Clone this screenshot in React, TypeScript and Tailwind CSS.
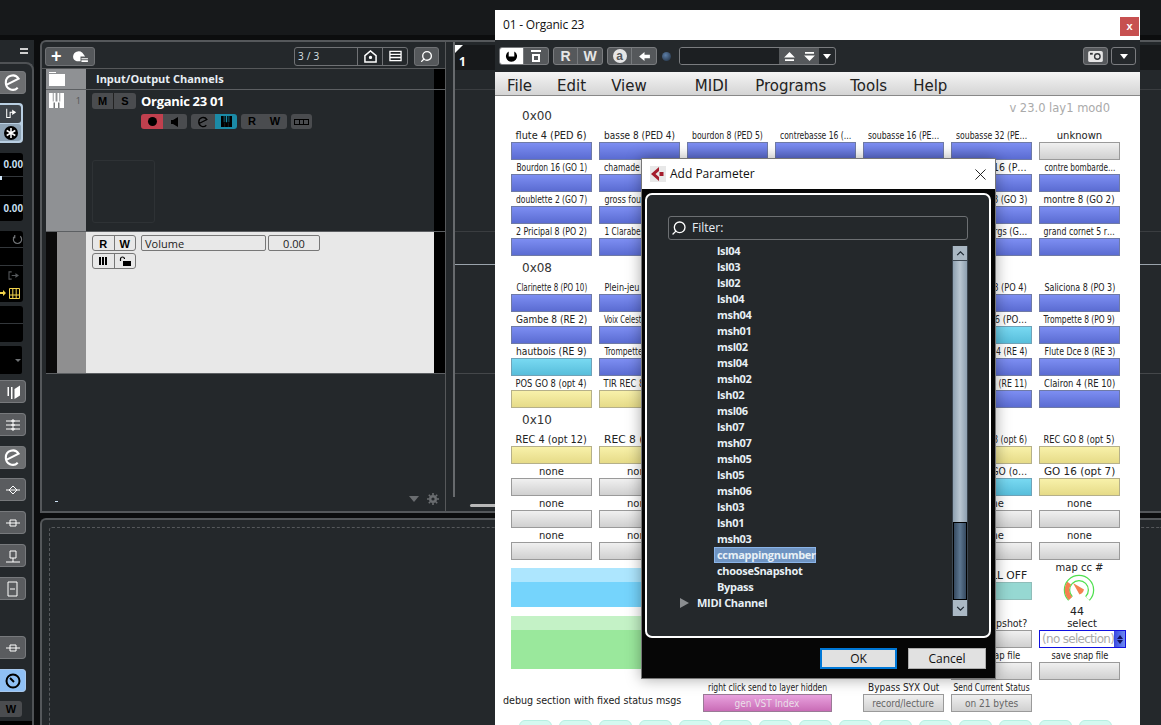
import { useLayoutEffect, useRef, useState, type ReactNode } from 'react';
import { Search } from 'lucide-react';

type Tone = 'b' | 'c' | 'y' | 'g';
type Cell = [string, Tone];

const tones: Record<Tone, string> = {
  b: 'border-[#6f7aa6] bg-linear-to-b from-[#7d8ef2] to-[#5b6cd2]',
  c: 'border-[#6fa3b8] bg-linear-to-b from-[#78d9f2] to-[#58bedb]',
  y: 'border-[#b5b08a] bg-linear-to-b from-[#f8f1aa] to-[#e6db88]',
  g: 'border-[#9a9a9a] bg-linear-to-b from-[#f0f0f0] to-[#d0d0d0]',
};

// empty labels sit fully behind the Add Parameter dialog
const sec1: Cell[] = [
  ['flute 4 (PED 6)', 'b'], ['basse 8 (PED 4)', 'b'], ['bourdon 8 (PED 5)', 'b'], ['contrebasse 16 (…', 'b'], ['soubasse 16 (PE…', 'b'], ['soubasse 32 (PE…', 'b'], ['unknown', 'g'],
  ['Bourdon 16 (GO 1)', 'b'], ['chamade 8 (GO 9)', 'b'], ['', 'b'], ['', 'b'], ['', 'b'], ['montre 16 (P…', 'b'], ['contre bombarde…', 'b'],
  ['doublette 2 (GO 7)', 'b'], ['gross fourniture 4', 'b'], ['', 'b'], ['', 'b'], ['', 'b'], ['bourdon 8 (GO 3)', 'b'], ['montre 8 (GO 2)', 'b'],
  ['2 Pricipal 8 (PO 2)', 'b'], ['1 Clarabelle 8 (PO)', 'b'], ['', 'b'], ['', 'b'], ['', 'b'], ['Cornet 5 rgs (G…', 'b'], ['grand cornet 5 r…', 'b'],
];

const sec2: Cell[] = [
  ['Clarinette 8 (PO 10)', 'b'], ['Plein-jeu 5 (PO 8)', 'b'], ['', 'b'], ['', 'b'], ['', 'b'], ['Bourdon 8 (PO 4)', 'b'], ['Saliciona 8 (PO 3)', 'b'],
  ['Gambe 8 (RE 2)', 'b'], ['Voix Celeste 8 (RE 5)', 'b'], ['', 'b'], ['', 'b'], ['', 'b'], ['basson 16 (PO…', 'c'], ['Trompette 8 (PO 9)', 'b'],
  ['hautbois (RE 9)', 'c'], ['Trompette 8 (RE 8)', 'b'], ['', 'b'], ['', 'b'], ['', 'b'], ['Flute Dce 4 (RE 4)', 'b'], ['Flute Dce 8 (RE 3)', 'b'],
  ['POS GO 8 (opt 4)', 'y'], ['TIR REC 8 (opt 2)', 'y'], ['', 'y'], ['', 'y'], ['', 'b'], ['Basson 16 (RE 11)', 'b'], ['Clairon 4 (RE 10)', 'b'],
];

const sec3: Cell[] = [
  ['REC 4 (opt 12)', 'y'], ['REC 8 (opt 8)', 'y'], ['', 'y'], ['', 'y'], ['', 'y'], ['REC POS 8 (opt 6)', 'y'], ['REC GO 8 (opt 5)', 'y'],
  ['none', 'g'], ['none', 'g'], ['', 'g'], ['', 'g'], ['', 'g'], ['Tirasse GO (o…', 'c'], ['GO 16 (opt 7)', 'y'],
  ['none', 'g'], ['none', 'g'], ['', 'g'], ['', 'g'], ['', 'g'], ['none', 'g'], ['none', 'g'],
  ['none', 'g'], ['none', 'g'], ['', 'g'], ['', 'g'], ['', 'g'], ['none', 'g'], ['none', 'g'],
];

const params = ['lsl04', 'lsl03', 'lsl02', 'lsh04', 'msh04', 'msh01', 'msl02', 'msl04', 'msh02', 'lsh02', 'msl06', 'lsh07', 'msh07', 'msh05', 'lsh05', 'msh06', 'lsh03', 'lsh01', 'msh03', 'ccmappingnumber', 'chooseSnapshot', 'Bypass'];

// JUCE squeezes labels to the cell width, so measure and do the same
function Label({ text, width = 71 }: { text: string; width?: number }) {
  const ref = useRef<HTMLSpanElement>(null);
  const [scale, setScale] = useState(1);
  useLayoutEffect(() => {
    const w = ref.current?.offsetWidth ?? 0;
    if (w > width) setScale(width / w);
  }, [text, width]);
  const size = text.length > 19 || text.length <= 8 ? 'text-[10px]' : 'text-[11px]';
  return (
    <div className="flex h-[14px] items-center justify-center pt-px">
      <span
        ref={ref}
        style={{ transform: `scaleX(${scale})` }}
        className={`inline-block shrink-0 whitespace-nowrap font-['DejaVu_Sans'] leading-[13px] text-[#222] ${size}`}
      >
        {text}
      </span>
    </div>
  );
}

function Stop({ label, tone, width }: { label: string; tone: Tone; width?: number }) {
  return (
    <div>
      <Label text={label} width={width} />
      <div className={`h-[18px] border ${tones[tone]}`} />
    </div>
  );
}

function Section({ title, cells, aside }: { title: string; cells: Cell[]; aside?: ReactNode }) {
  return (
    <div className="pl-4">
      <div className="relative flex h-[24px] items-center pl-[11px] font-['DejaVu_Sans'] text-[12px] text-[#333]">
        {title}
        {aside}
      </div>
      <div className="grid grid-cols-[repeat(7,81px)] gap-x-[7px]">
        {cells.map(([label, tone], i) => (
          <Stop key={i} label={label} tone={tone} />
        ))}
      </div>
    </div>
  );
}

function ELogo({ className = '' }: { className?: string }) {
  return (
    <svg viewBox="0 0 20 20" className={className} fill="none" stroke="currentColor" strokeWidth="2.2">
      <path d="M3.5 12.5 L16.5 6 A7.3 7.3 0 0 0 3 10 A7.3 7.3 0 0 0 15.5 15.5" />
    </svg>
  );
}

function Keys({ className = '' }: { className?: string }) {
  return (
    <svg viewBox="0 0 16 16" className={className} fill="currentColor">
      <path d="M0 0h4v9h1V0h2v9h2V0h2v9h1V0h4v16H0z" />
      <path d="M5 10h1v6H5zM10 10h1v6h-1z" fill="#24282b" />
    </svg>
  );
}

function Seg({ children, className = '' }: { children: ReactNode; className?: string }) {
  return <div className={`flex h-[16px] w-[24px] items-center justify-center ${className}`}>{children}</div>;
}

function Group({ children, className = '' }: { children: ReactNode; className?: string }) {
  return <div className={`flex divide-x divide-[#777a7d] overflow-hidden rounded-[3px] border border-[#7a7c7f] ${className}`}>{children}</div>;
}

const tbText = "font-['Liberation_Sans'] text-[14px] font-bold leading-none text-[#e6e6e6]";
const railBtn = 'flex h-[23px] w-[26px] items-center justify-center rounded-r-[4px] border border-l-0 border-[#77797c] bg-[#5a5c5f] text-white';
const smallBtn = "flex h-[16px] w-[22px] items-center justify-center font-['Liberation_Sans'] text-[11px] font-black leading-none";
const darkBtn = 'bg-[#4a4c4f] text-black';
const lightBtn = 'text-black';

function RailIcon({ d, className = 'mt-[10px]' }: { d: string; className?: string }) {
  return (
    <div className={`${railBtn} ${className}`}>
      <svg viewBox="0 0 16 16" className="h-4 w-4" fill="none" stroke="currentColor" strokeWidth="1">
        <path d={d} />
      </svg>
    </div>
  );
}

function LeftRail() {
  return (
    <div className="flex w-[34px] shrink-0 flex-col bg-[#24282b]">
      <div className="flex h-[22px] shrink-0 items-center justify-end pr-[6px]">
        <div className="h-[6px] w-2 border-y-2 border-[#d0d0d0]" />
      </div>
      <div className="flex flex-1 flex-col rounded-tr-[8px] border-t-2 border-r-2 border-[#4f5255] pt-[7px]">
        <div className={`${railBtn} bg-[#6d6f71]`}>
          <ELogo className="h-[19px] w-[19px]" />
        </div>
        <div className="mt-[9px] w-[23px] rounded-r-[4px] bg-[#b9cfe2] py-[2px] pr-[2px]">
          <div className="flex h-[18px] items-center justify-center rounded-r-[3px] bg-[#3c4248] text-white">
            <svg viewBox="0 0 14 14" className="h-3 w-3" fill="none" stroke="currentColor" strokeWidth="1.2">
              <path d="M2 1v10h4V5h5M9 3l3 2-3 2z" />
            </svg>
          </div>
          <div className="mt-[1px] flex h-[17px] items-center justify-center rounded-r-[3px] bg-[#8ea3b5]">
            <svg viewBox="0 0 14 14" className="h-[14px] w-[14px]">
              <circle cx="7" cy="7" r="7" fill="black" />
              <path d="M7 2v10M2.7 4.5l8.6 5M2.7 9.5l8.6-5" stroke="white" strokeWidth="1.5" />
            </svg>
          </div>
        </div>
        <div className="mt-[10px] flex h-[68px] w-[23px] flex-col rounded-r-[3px] bg-black font-['Liberation_Sans'] text-[10px] font-bold text-[#cfe4f8]">
          <div className="h-[23px] pt-[7px] text-right leading-none">0.00</div>
          <div className="h-px bg-[#33373b]" />
          <div className="mt-[-1px] h-[4px] w-[2px] bg-[#cfe4f8]" />
          <div className="mt-[15px] h-px bg-[#33373b]" />
          <div className="pt-[8px] text-right leading-none">0.00</div>
        </div>
        <div className="mt-[10px] flex w-[23px] flex-col rounded-r-[3px] bg-black">
          <div className="flex h-[17px] items-center justify-end border-b border-[#33373b] text-[#6f7275]">
            <svg viewBox="0 0 12 12" className="h-[11px] w-[11px]" fill="none" stroke="currentColor" strokeWidth="1.3">
              <path d="M3 2.5A4.5 4.5 0 1 0 9 2.5M3 1v3h-2" />
            </svg>
          </div>
          <div className="h-[18px] border-b border-[#33373b]" />
          <div className="flex h-[18px] items-center justify-end pr-[4px] text-[#55585b]">
            <svg viewBox="0 0 12 10" className="h-[9px] w-[11px]" fill="none" stroke="currentColor" strokeWidth="1.2">
              <path d="M4 1H1v8h3M4 5h7M8 3l3 2-3 2" />
            </svg>
          </div>
          <div className="flex h-[18px] items-center justify-between text-[#f3d44c]">
            <svg viewBox="0 0 6 8" className="h-2 w-[6px]" fill="currentColor">
              <path d="M0 3h3V1l3 3-3 3V5H0z" />
            </svg>
            <svg viewBox="0 0 11 11" className="mr-[3px] h-[11px] w-[11px]" fill="none" stroke="currentColor" strokeWidth="1">
              <path d="M.5.5h10v10H.5zM3.8.5v10M7.2.5v10M.5 7h10" />
            </svg>
          </div>
        </div>
        <div className="mt-[4px] h-[36px] w-[23px] rounded-r-[3px] bg-black">
          <div className="h-[18px] border-b border-[#33373b]" />
        </div>
        <div className="mt-[4px] flex h-[28px] w-[23px] items-center justify-end pr-[1px]">
          <div className="flex h-full w-full items-center justify-end rounded-r-[2px] bg-black pr-[1px]">
            <div className="h-0 w-0 border-x-[3px] border-t-[3px] border-x-transparent border-t-[#6f7275]" />
          </div>
        </div>
        <div className={`${railBtn} mt-[6px]`}>
          <svg viewBox="0 0 16 16" className="h-4 w-4" fill="currentColor">
            <path d="M2.5 3H4v9H2.5zM6 3h1.5v12H6zM9.5 15V5L15 1.5v10z" />
          </svg>
        </div>
        <RailIcon d="M1 4h14M1 8h14M1 12h14M7 3h2v2H7zM7 7h2v2H7zM7 11h2v2H7z" />
        <div className={`${railBtn} mt-[10px] bg-[#6d6f71]`}>
          <ELogo className="h-[19px] w-[19px]" />
        </div>
        <RailIcon className="mt-[9px]" d="M1 8h14M8 4l4 4-4 4-4-4z" />
        <RailIcon d="M1 8h14M5 5h6v6H5z" />
        <RailIcon d="M1 14h14M5 3h6v7H5zM8 10v4" />
        <RailIcon d="M3 1h9v14H3zM5 8h5" />
        <RailIcon className="mt-[36px]" d="M1 8h14M5 5h6v6H5z" />
        <div className="mt-[10px] flex h-[23px] w-[26px] items-center justify-center rounded-r-[4px] border border-l-0 border-[#a8c8ec] bg-[#8fc0f5]">
          <svg viewBox="0 0 16 16" className="h-4 w-4" fill="none" stroke="black" strokeWidth="2">
            <circle cx="8" cy="8" r="6.5" />
            <path d="M5 5l4 4" />
          </svg>
        </div>
        <div className={`mt-[9px] w-[22px] ${smallBtn} rounded-r-[3px] ${darkBtn}`}>W</div>
        <div className="mt-[4px] flex-1 bg-black" />
      </div>
    </div>
  );
}

function TrackList() {
  return (
    <div className="ml-[4px] flex h-[305px] shrink-0 flex-col">
      <div className="flex h-[21px] border-b border-[#5c5f62]">
        <div className="flex w-[40px] items-center bg-[#8f9194] pl-[3px]">
          <svg viewBox="0 0 16 14" className="h-[14px] w-[16px]" fill="white">
            <path d="M0 0h7v1H0zM0 2h16v12H0z" />
          </svg>
        </div>
        <div className="flex-1 pl-[10px] font-['Open_Sans'] text-[11px] font-bold leading-[20px] text-[#e8eef4]">Input/Output Channels</div>
        <div className="w-[11px] bg-black" />
      </div>
      <div className="flex h-[142px] border-b border-[#5c5f62]">
        <div className="flex w-[40px] items-start justify-between bg-[#8f9194] pt-[3px] pr-[5px] pl-[3px] text-white">
          <Keys className="h-[15px] w-[15px]" />
          <span className="font-['Open_Sans'] text-[9px] leading-[16px] text-[#555]">1</span>
        </div>
        <div className="flex flex-1 flex-col pt-[3px] pl-[6px]">
          <div className="flex">
            <div className="flex h-[16px] divide-x divide-[#222] overflow-hidden rounded-[3px]">
              <div className={`${smallBtn} ${darkBtn}`}>M</div>
              <div className={`${smallBtn} ${darkBtn}`}>S</div>
            </div>
            <div className="ml-[5px] font-['Open_Sans'] text-[13px] leading-[17px] font-bold tracking-[-0.3px] text-white">Organic 23 01</div>
          </div>
          <div className="mt-[4px] ml-[49px] flex gap-[4px]">
            <div className="flex h-[15px] overflow-hidden rounded-[3px]">
              <div className="flex w-[22px] items-center justify-center bg-[#c0404e]">
                <div className="h-[9px] w-[9px] rounded-full bg-black" />
              </div>
              <div className="flex w-[24px] items-center justify-center bg-[#4a4c4f]">
                <svg viewBox="0 0 8 10" className="h-[10px] w-2" fill="black">
                  <path d="M0 3h2l5-3v10L2 7H0z" />
                </svg>
              </div>
            </div>
            <div className="flex h-[15px] overflow-hidden rounded-[3px]">
              <div className="flex w-[24px] items-center justify-center bg-[#4a4c4f] text-black">
                <ELogo className="h-[12px] w-[12px]" />
              </div>
              <div className="flex w-[22px] items-center justify-center bg-[#1b8aa6] text-black">
                <Keys className="h-[11px] w-[11px]" />
              </div>
            </div>
            <div className={`flex h-[15px] w-[46px] justify-around overflow-hidden rounded-[3px] ${darkBtn} font-['Liberation_Sans'] text-[11px] leading-[15px] font-black`}>
              <span>R</span>
              <span>W</span>
            </div>
            <div className="flex h-[15px] w-[21px] items-center justify-center rounded-[3px] bg-[#4a4c4f]">
              <div className="flex h-[6px] w-[15px] divide-x divide-black border border-black">
                <div className="flex-1" />
                <div className="flex-1" />
                <div className="flex-1" />
              </div>
            </div>
          </div>
          <div className="mt-[31px] h-[63px] w-[63px] rounded-[3px] border border-[#2e3235]" />
        </div>
        <div className="w-[11px] bg-black" />
      </div>
      <div className="flex flex-1 border-b border-[#5c5f62]">
        <div className="w-[11px] bg-[#0a0a0a]" />
        <div className="w-[29px] bg-[#8f8f90]" />
        <div className="flex flex-1 flex-col gap-[2px] bg-[#e8e8e8] pt-[3px] pl-[6px]">
          <div className="flex">
            <div className="flex h-[16px] w-[44px] divide-x divide-[#777] overflow-hidden rounded-[3px] border border-[#777]">
              <div className={`${smallBtn} flex-1 ${lightBtn}`}>R</div>
              <div className={`${smallBtn} flex-1 ${lightBtn}`}>W</div>
            </div>
            <div className="ml-[5px] h-[16px] w-[125px] rounded-[2px] border border-[#777] pl-[3px] font-['Open_Sans'] text-[11px] leading-[15px] text-[#222]">Volume</div>
            <div className="ml-[2px] h-[16px] w-[52px] rounded-[2px] border border-[#777] text-center font-['Open_Sans'] text-[11px] leading-[15px] text-[#222]">0.00</div>
          </div>
          <div className="flex h-[16px] w-[44px] divide-x divide-[#777] overflow-hidden rounded-[3px] border border-[#777]">
            <div className="flex flex-1 items-center justify-center gap-px">
              <i className="h-[8px] w-[2px] bg-black" />
              <i className="h-[8px] w-[2px] bg-black" />
              <i className="h-[8px] w-[2px] bg-black" />
            </div>
            <div className="flex flex-1 items-center justify-center">
              <svg viewBox="0 0 12 10" className="h-[10px] w-[12px]">
                <path d="M1.5 5V3a2 2 0 0 1 4 0" fill="none" stroke="black" strokeWidth="1.2" />
                <path d="M4 5h8v5H4z" fill="black" />
              </svg>
            </div>
          </div>
        </div>
        <div className="w-[11px] bg-black" />
      </div>
    </div>
  );
}

function ProjectPanel() {
  return (
    <div className="flex h-[473px] shrink-0 overflow-hidden rounded-tl-[6px] border-t-2 border-b-2 border-l-2 border-[#55585b] bg-[#24282b]">
      <div className="flex w-[404px] shrink-0 flex-col border-r border-[#56585a]">
        <div className="flex h-[27px] shrink-0 items-center justify-between border-b border-[#56585a] pt-[2px] pr-[6px] pl-[3px]">
          <div className="flex h-[19px] w-[50px] items-center justify-around rounded-[3px] border border-[#707275] bg-[#55585b] text-white">
            <span className="font-['Liberation_Sans'] text-[18px] leading-none font-bold">+</span>
            <svg viewBox="0 0 18 14" className="h-[13px] w-[17px]" fill="currentColor">
              <path d="M1 7a6 6 0 0 1 10-4l3 4h-5v5H5a5 5 0 0 1-4-5zM10 9h7v1h-7zM10 11h7v2h-7z" />
            </svg>
          </div>
          <div className="flex gap-[6px]">
            <div className="flex h-[19px] overflow-hidden rounded-[3px] border border-[#707275]">
              <div className="w-[62px] pl-[3px] font-['Open_Sans'] text-[10px] leading-[17px] tracking-wide text-[#dde3e8]">3 / 3</div>
              <div className="flex w-[25px] items-center justify-center border-l border-[#707275] text-white">
                <svg viewBox="0 0 14 14" className="h-[13px] w-[13px]" fill="none" stroke="currentColor" strokeWidth="1.6">
                  <path d="M1 6l6-5 6 5v7H1z" />
                  <circle cx="7" cy="8" r="1" fill="currentColor" />
                </svg>
              </div>
              <div className="flex w-[25px] items-center justify-center border-l border-[#707275] text-white">
                <svg viewBox="0 0 14 12" className="h-[12px] w-[13px]" fill="none" stroke="currentColor" strokeWidth="1.4">
                  <path d="M1 1h12v10H1zM1 4.3h12M1 7.6h12" />
                </svg>
              </div>
            </div>
            <div className="flex h-[19px] w-[25px] items-center justify-center rounded-[3px] border border-[#707275] bg-[#55585b] text-white">
              <Search className="h-[13px] w-[13px] -scale-x-100" strokeWidth={2.5} />
            </div>
          </div>
        </div>
        <TrackList />
        <div className="flex flex-1 items-end justify-between pr-[6px] pb-[6px] pl-[13px]">
          <div className="mb-[3px] h-px w-[3px] bg-[#cfe4f8]" />
          <div className="flex items-center gap-[8px]">
            <div className="h-0 w-0 border-x-[5px] border-t-[6px] border-x-transparent border-t-[#6a6d70]" />
            <svg viewBox="0 0 12 12" className="h-[12px] w-[12px]" fill="none" stroke="#6a6d70">
              <circle cx="6" cy="6" r="2.8" strokeWidth="2.4" />
              <path d="M6 0v2M6 10v2M0 6h2M10 6h2M1.8 1.8l1.4 1.4M8.8 8.8l1.4 1.4M1.8 10.2l1.4-1.4M8.8 3.2l1.4-1.4" strokeWidth="1.6" />
            </svg>
          </div>
        </div>
      </div>
      <div className="ml-[7px] h-[455px] w-[2px] shrink-0 bg-[#676a6d]" />
      <div className="flex flex-1 flex-col">
        <div className="h-[28px] shrink-0 pt-[3px]">
          <div className="relative h-full bg-[#17191b] pl-[4px] font-['Open_Sans'] text-[12px] font-bold leading-[34px] text-white">
            1
            <div className="absolute top-0 left-0 h-0 w-0 border-t-[8px] border-r-[8px] border-t-white border-r-transparent" />
          </div>
        </div>
        <div className="h-[20px] shrink-0 border-b border-[#3a3d40]" />
        <div className="h-[142px] shrink-0 border-b border-[#3a3d40]" />
        <div className="h-[33px] shrink-0 border-b border-[#9aa3ab]" />
        <div className="h-[109px] shrink-0 border-b border-[#44474a]" />
        <div className="mt-[130px] ml-[15px] h-[3px] w-[60px] rounded-l-[2px] bg-[#b8b8b8]" />
      </div>
    </div>
  );
}

function EditorPanel() {
  return (
    <div className="mt-[5px] min-h-0 flex-1 overflow-hidden rounded-tl-[6px] border-t-2 border-l-2 border-[#55585b] bg-[#24282b] pt-[7px] pl-[7px]">
      <div className="h-full rounded-tl-[3px] border-t border-l border-dashed border-[#55585b]" />
    </div>
  );
}

function PluginToolbar() {
  return (
    <div className="flex h-[32px] items-center bg-[#24282b] pl-[4px]">
      <Group className="bg-[#55585b]">
        <Seg className="bg-white text-black">
          <svg viewBox="0 0 14 14" className="h-[13px] w-[13px]" fill="currentColor">
            <path d="M4 1.5a6 6 0 1 0 6 0V7H4z" />
          </svg>
        </Seg>
        <Seg className="text-white">
          <svg viewBox="0 0 12 12" className="h-[12px] w-[12px]" fill="none" stroke="currentColor" strokeWidth="2">
            <path d="M1 1h10M3 5h6v6H3z" />
          </svg>
        </Seg>
      </Group>
      <Group className="ml-[4px] bg-[#55585b]">
        <Seg className={tbText}>R</Seg>
        <Seg className={tbText}>W</Seg>
      </Group>
      <Group className="ml-[4px] bg-[#55585b]">
        <Seg>
          <div className="flex h-[14px] w-[14px] items-center justify-center rounded-full bg-[#e6e6e6] font-['Liberation_Sans'] text-[12px] leading-none font-bold text-[#55585b]">a</div>
        </Seg>
        <Seg className="text-white">
          <svg viewBox="0 0 12 10" className="h-[9px] w-[11px]" fill="currentColor">
            <path d="M0 5l6-5v3h6v4H6v3z" />
          </svg>
        </Seg>
      </Group>
      <div className="ml-[5px] h-[9px] w-[9px] rounded-full bg-[radial-gradient(circle_at_40%_35%,#5d7fa8,#1d2a3a)]" />
      <div className="ml-[8px] flex h-[18px] overflow-hidden rounded-[3px] border border-[#7a7c7f]">
        <div className="w-[99px] bg-[#1c1f22]" />
        <div className="flex w-[40px] items-center justify-around bg-[#55585b] text-white">
          <svg viewBox="0 0 12 10" className="h-[9px] w-[11px]" fill="currentColor">
            <path d="M6 0l6 6H0zM1 8h10v2H1z" />
          </svg>
          <svg viewBox="0 0 12 10" className="h-[9px] w-[11px]" fill="currentColor">
            <path d="M1 0h10v2H1zM0 4h12l-6 6z" />
          </svg>
        </div>
        <div className="flex w-[16px] items-center justify-center">
          <div className="h-0 w-0 border-x-[4px] border-t-[5px] border-x-transparent border-t-white" />
        </div>
      </div>
      <div className="ml-auto flex items-center gap-[3px] pr-[4px]">
        <div className="flex h-[18px] w-[25px] items-center justify-center rounded-[3px] border border-[#7a7c7f] bg-[#55585b]">
          <svg viewBox="0 0 16 12" className="h-[11px] w-[15px]">
            <rect width="16" height="12" rx="2" fill="#e6e6e6" />
            <rect x="2" y="2" width="3" height="2" fill="#33363a" />
            <circle cx="10" cy="6" r="3" fill="none" stroke="#33363a" strokeWidth="1.5" />
          </svg>
        </div>
        <div className="flex h-[18px] w-[25px] items-center justify-center rounded-[3px] border border-[#7a7c7f]">
          <div className="h-0 w-0 border-x-[4px] border-t-[5px] border-x-transparent border-t-white" />
        </div>
      </div>
    </div>
  );
}

function Knob() {
  return (
    <svg viewBox="0 0 32 32" className="mx-auto h-[32px] w-[32px] -translate-x-[1px]" fill="none">
      <path d="M7.5 24.5A12 12 0 1 1 24.5 24.5" stroke="#4fe04f" strokeWidth="6.5" />
      <path d="M7.5 24.5A12 12 0 1 1 24.5 24.5" stroke="white" strokeWidth="4" />
      <path d="M7.5 24.5A12 12 0 0 1 6.2 9.1" stroke="#f5814f" strokeWidth="4.5" />
      <path d="M10 9L21 15.5Q20 19.5 16.5 20.5z" fill="#f5814f" />
    </svg>
  );
}

function PluginBottom() {
  return (
    <>
      <div className="flex gap-[7px] pl-4">
        <div className="w-[433px] pt-[8px]">
          <div className="h-[39px] bg-[#75d4fc]">
            <div className="h-[14px] bg-[#ade6fe]" />
          </div>
          <div className="mt-[9px] h-[53px] bg-[#9ae89c]">
            <div className="h-[14px] bg-[#c4f2c6]" />
          </div>
        </div>
        <div className="w-[81px] pt-[8px]">
          <Label text="Stop ALL OFF" />
          <div className="h-[18px] border border-[#8fbdb9] bg-[#96d8d2]" />
          <div className="mt-[16px]">
            <Stop label="take snapshot?" tone="g" />
          </div>
          <Stop label="load snap file" tone="g" width={57} />
        </div>
        <div className="w-[81px]">
          <Label text="map cc #" />
          <Knob />
          <div className="h-[12px] pr-[5px] text-center font-['DejaVu_Sans'] text-[11px] leading-[12px] text-[#222]">44</div>
          <div className="h-[12px] pl-[5px] text-center font-['DejaVu_Sans'] text-[10px] leading-[12px] text-[#222]">select</div>
          <div className="flex h-[18px] w-[87px] border border-[#1010e0] bg-white">
            <div className="flex-1 pl-[2px] font-['DejaVu_Sans'] text-[12px] leading-[17px] tracking-[-0.7px] whitespace-nowrap text-[#aaa]">(no selection)</div>
            <div className="flex w-[13px] flex-col items-center justify-center gap-px bg-linear-to-r from-[#3a46e0] to-[#6f8af0]">
              <div className="h-0 w-0 border-x-[3px] border-b-[4px] border-x-transparent border-b-[#101060]" />
              <div className="h-0 w-0 border-x-[3px] border-t-[4px] border-x-transparent border-t-[#101060]" />
            </div>
          </div>
          <Stop label="save snap file" tone="g" width={57} />
        </div>
      </div>
      <div className="flex pl-2">
        <div className="w-[200px] pt-[13px] font-['DejaVu_Sans'] text-[11px] whitespace-nowrap text-[#222]">
          <div className="origin-left scale-x-[0.87]">debug section with fixed status msgs</div>
        </div>
        <div className="w-[129px]">
          <Label text="right click send to layer hidden" width={119} />
          <div className="flex h-[18px] items-center justify-center border border-[#9a7a96] bg-linear-to-b from-[#e8a2de] to-[#c96cb6] font-['DejaVu_Sans'] text-[10px] text-[#eadfe8]">
            <span className="scale-x-[0.9]">gen VST Index</span>
          </div>
        </div>
        <div className="ml-[31px] w-[81px]">
          <Label text="Bypass SYX Out" />
          <div className={`flex h-[18px] items-center justify-center border ${tones.g} font-['DejaVu_Sans'] text-[10px] text-[#666]`}>
            <span className="scale-x-[0.88]">record/lecture</span>
          </div>
        </div>
        <div className="ml-[7px] w-[81px]">
          <Label text="Send Current Status" width={76} />
          <div className={`flex h-[18px] items-center justify-center border ${tones.g} font-['DejaVu_Sans'] text-[10px] text-[#666]`}>
            <span className="scale-x-[0.9]">on 21 bytes</span>
          </div>
        </div>
      </div>
      <div className="flex gap-[7px] pt-[8px] pl-[24px]">
        {Array.from({ length: 15 }).map((_, i) => (
          <div key={i} className="h-[12px] w-[33px] rounded-t-[6px] border border-[#b8efe2] bg-[#d4f9f0]" />
        ))}
      </div>
    </>
  );
}

function PluginWindow() {
  return (
    <div className="absolute top-[10px] left-[495px] h-[715px] w-[645px] overflow-hidden bg-white">
      <div className="flex h-[30px] items-start justify-between bg-white pt-[7px] pr-px pl-2">
        <span className="font-['Open_Sans'] text-[12px] leading-[16px] tracking-[-0.2px] text-[#111]">01 - Organic 23</span>
        <div className="flex h-[19px] w-[19px] items-center justify-center bg-[#c75050] font-['Liberation_Sans'] text-[11px] leading-none font-bold text-white">x</div>
      </div>
      <PluginToolbar />
      <div className="flex h-[24px] items-center border-b border-[#888] bg-linear-to-b from-[#f5f5f5] to-[#d4d4d4] pt-[5px] font-['DejaVu_Sans'] text-[15px] text-[#222]">
        <span className="ml-[12px]">File</span>
        <span className="ml-[25px]">Edit</span>
        <span className="ml-[25px]">View</span>
        <span className="ml-[48px]">MIDI</span>
        <span className="ml-[27px]">Programs</span>
        <span className="ml-[24px]">Tools</span>
        <span className="ml-[26px]">Help</span>
      </div>
      <div className="pt-[8px]">
        <Section
          title="0x00"
          cells={sec1}
          aside={<span className="absolute top-[-4px] right-[30px] text-[11.5px] text-[#aaa]">v 23.0 lay1 mod0</span>}
        />
        <Section title="0x08" cells={sec2} />
        <Section title="0x10" cells={sec3} />
        <PluginBottom />
      </div>
    </div>
  );
}

function AddParameterDialog() {
  return (
    <div className="absolute top-[158px] left-[641px] flex h-[521px] w-[355px] flex-col border border-[#777] bg-[#060606] shadow-[0_0_14px_rgba(0,0,0,0.35)]">
      <div className="flex h-[30px] shrink-0 items-center bg-white pr-[9px] pl-[8px]">
        <svg viewBox="0 0 16 16" className="h-[16px] w-[16px]">
          <rect width="16" height="16" fill="#e8e8e8" />
          <path d="M9 1L1 8l8 7v-4L5.5 8 9 5z" fill="#a51d2d" />
          <path d="M9.5 6h4v4h-4z" fill="#a51d2d" />
        </svg>
        <span className="ml-[4px] font-['Open_Sans'] text-[12px] text-[#111]">Add Parameter</span>
        <svg viewBox="0 0 12 12" className="ml-auto h-[11px] w-[11px]" stroke="#111" strokeWidth="1">
          <path d="M.5.5l11 11M11.5.5l-11 11" />
        </svg>
      </div>
      <div className="mt-[4px] ml-[3px] flex h-[445px] w-[346px] flex-col rounded-[7px] border-2 border-white bg-[#24282b] px-[21px] pt-[21px]">
        <div className="flex h-[24px] shrink-0 items-center rounded-[3px] border border-[#6c6f72] pl-[2px] font-['Open_Sans'] text-[12px] text-[#e8eef4]">
          <Search className="h-[16px] w-[16px] -scale-x-100 text-white" strokeWidth={2} />
          <span className="ml-[5px]">Filter:</span>
        </div>
        <div className="flex">
          <div className="flex-1 pt-[3px] font-['Open_Sans'] text-[11px] leading-[16px] font-bold tracking-[-0.3px] text-[#e8f0f6]">
            {params.map((p) => (
              <div key={p} className="h-[16px] pl-[49px]">
                {p === 'ccmappingnumber' ? (
                  <span className="ml-[-3px] inline-block w-[102px] border border-[#8ab4e8] bg-[#6f94c2] pl-[2px] leading-[14px]">{p}</span>
                ) : (
                  p
                )}
              </div>
            ))}
            <div className="flex h-[16px] items-center pl-[12px]">
              <div className="h-0 w-0 border-y-[5px] border-l-[9px] border-y-transparent border-l-[#8a8d90]" />
              <span className="ml-[8px]">MIDI Channel</span>
            </div>
          </div>
          <div className="mt-[6px] flex h-[370px] w-[16px] flex-col border-x border-[#3c4650]">
            <div className="flex h-[15px] items-center justify-center border-b border-[#3c4650] bg-[#aab8c4] text-[#1c2630]">
              <svg viewBox="0 0 10 6" className="h-[5px] w-[9px]" fill="none" stroke="currentColor" strokeWidth="1.4">
                <path d="M1 5l4-4 4 4" />
              </svg>
            </div>
            <div className="h-[261px] bg-linear-to-r from-[#8ea0b0] via-[#bac7d2] to-[#8ea0b0]" />
            <div className="h-[78px] border border-black bg-linear-to-r from-[#364a60] via-[#5c7690] to-[#364a60]" />
            <div className="flex h-[16px] items-center justify-center bg-[#aab8c4] text-[#1c2630]">
              <svg viewBox="0 0 10 6" className="h-[5px] w-[9px]" fill="none" stroke="currentColor" strokeWidth="1.4">
                <path d="M1 1l4 4 4-4" />
              </svg>
            </div>
          </div>
        </div>
      </div>
      <div className="mt-[10px] flex justify-end gap-[11px] pr-[9px] font-['Open_Sans'] text-[12px] text-[#111]">
        <button className="h-[21px] w-[77px] border-2 border-[#0078d7] bg-[#e1e1e1]">OK</button>
        <button className="h-[21px] w-[78px] border border-[#adadad] bg-[#e1e1e1]">Cancel</button>
      </div>
    </div>
  );
}

export default function App() {
  return (
    <div className="relative flex h-[725px] w-[1161px] flex-col overflow-hidden bg-[#0c0d0e]">
      <div className="h-[35px] shrink-0 bg-[#17191b]" />
      <div className="flex min-h-0 flex-1 pt-[5px]">
        <LeftRail />
        <div className="ml-[6px] flex min-w-0 flex-1 flex-col">
          <ProjectPanel />
          <EditorPanel />
        </div>
      </div>
      <PluginWindow />
      <AddParameterDialog />
    </div>
  );
}
